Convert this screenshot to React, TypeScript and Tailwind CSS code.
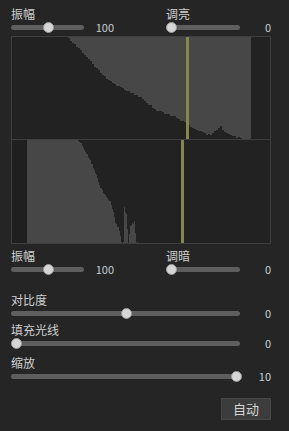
import React from 'react';

const FONT = { fontFamily: '"Noto Sans CJK SC", "Noto Sans", sans-serif' };

type Pt = [number, number];

// piecewise linear lookup with a little deterministic jitter, drawn as steps
function stairs(ctrl: Pt[], x0: number, x1: number, step: number, amp: number, seed: number): Pt[] {
  const out: Pt[] = [];
  const at = (x: number) => {
    for (let i = 0; i < ctrl.length - 1; i++) {
      const [ax, ay] = ctrl[i];
      const [bx, by] = ctrl[i + 1];
      if (x >= ax && x <= bx) return ay + ((x - ax) / (bx - ax)) * (by - ay);
    }
    return ctrl[ctrl.length - 1][1];
  };
  let prev = at(x0);
  out.push([x0, prev]);
  for (let x = x0 + step; x <= x1; x += step) {
    const n = Math.sin(x * 12.9898 + seed) * 43758.5453;
    const j = (n - Math.floor(n) - 0.5) * 2 * amp;
    const y = Math.round(at(x) + j);
    out.push([x, prev]);
    out.push([x, y]);
    prev = y;
  }
  return out;
}

const upperCurve: Pt[] = [
  [66, 37], [70, 41], [80, 50], [90, 62], [100, 73], [110, 82], [120, 87], [130, 92],
  [140, 98], [145, 102], [155, 110], [175, 117], [185, 123], [190, 127], [200, 132],
  [210, 135], [213, 132], [217, 129], [220, 126], [223, 132], [230, 135], [235, 137],
  [240, 138], [246, 139], [251, 139],
];

const lowerCurve: Pt[] = [
  [75, 140], [80, 142], [85, 152], [90, 160], [93, 168], [97, 178], [100, 188], [105, 195],
  [110, 202], [113, 212], [115, 223], [119, 230], [121, 243], [123, 243], [124, 206],
  [126, 215], [128, 243], [130, 226], [134, 222], [136, 243], [140, 243],
];

function toStr(p: Pt[]) {
  return p.map(([x, y]) => `${x},${y}`).join(' ');
}

function Histogram() {
  const up = [[12, 139], [12, 37], ...stairs(upperCurve, 66, 251, 2, 0.8, 3), [251, 139]] as Pt[];
  const low = [[27, 243], [27, 140], ...stairs(lowerCurve, 75, 140, 1, 1.2, 7), [140, 243]] as Pt[];
  return (
    <svg width={260} height={208} viewBox="11 36 260 208" className="block">
      <rect x={11} y={36} width={260} height={208} fill="#222222" />
      <rect x={12} y={37} width={239} height={102} fill="#474747" />
      <polygon points={toStr(up)} fill="#222222" />
      <rect x={186} y={37} width={3} height={102} fill="#86864f" />
      <rect x={12} y={140} width={15} height={103} fill="#1f1f1f" />
      <polygon points={toStr(low)} fill="#474747" />
      <rect x={181} y={140} width={3} height={103} fill="#86864f" />
      <rect x={11.5} y={36.5} width={259} height={207} fill="none" stroke="#3e3e3e" />
      <line x1={11} y1={139.5} x2={271} y2={139.5} stroke="#3e3e3e" />
    </svg>
  );
}

function Slider({ width, frac }: { width: number; frac: number }) {
  const left = frac * (width - 9);
  return (
    <div className="relative h-[12px]" style={{ width }}>
      <div className="absolute left-0 right-0 top-[4px] h-[5px] rounded-full bg-[#5e5e5e]" />
      <div
        className="absolute top-[1px] h-[11px] w-[11px] rounded-full bg-[#d6d6d6] border border-[#9a9a9a]"
        style={{ left }}
      />
    </div>
  );
}

function Label({ text }: { text: string }) {
  return <div className="h-[14px] text-[12px] leading-[14px] text-[#cfcfcf]">{text}</div>;
}

function Value({ v }: { v: string }) {
  return <div className="flex-1 text-right text-[11px] leading-[12px] text-[#c6cdd5]">{v}</div>;
}

function HalfControl({ label, value, frac, sliderW, colW }: { label: string; value: string; frac: number; sliderW: number; colW: number }) {
  return (
    <div style={{ width: colW }}>
      <Label text={label} />
      <div className="flex items-center">
        <Slider width={sliderW} frac={frac} />
        <Value v={value} />
      </div>
    </div>
  );
}

function FullControl({ label, value, frac, className }: { label: string; value: string; frac: number; className: string }) {
  return (
    <div className={className}>
      <Label text={label} />
      <div className="flex items-center">
        <Slider width={229} frac={frac} />
        <Value v={value} />
      </div>
    </div>
  );
}

export default function App() {
  return (
    <div className="w-[289px] h-[431px] bg-[#252525] pl-[11px] pr-[18px] pt-[7px] overflow-hidden" style={FONT}>
      <div className="flex">
        <HalfControl label="振幅" value="100" frac={0.5} sliderW={73} colW={103} />
        <div className="ml-[52px]">
          <HalfControl label="调亮" value="0" frac={0} sliderW={74} colW={105} />
        </div>
      </div>

      <div className="mt-[3px]">
        <Histogram />
      </div>

      <div className="flex mt-[5px]">
        <HalfControl label="振幅" value="100" frac={0.5} sliderW={73} colW={103} />
        <div className="ml-[52px]">
          <HalfControl label="调暗" value="0" frac={0} sliderW={74} colW={105} />
        </div>
      </div>

      <FullControl label="对比度" value="0" frac={0.5} className="mt-[18px]" />
      <FullControl label="填充光线" value="0" frac={0} className="mt-[4px]" />
      <FullControl label="缩放" value="10" frac={1} className="mt-[7px]" />

      <div className="flex justify-end mt-[16px]">
        <button className="w-[50px] h-[22px] bg-[#3c3c3c] border border-[#474747] text-[13px] text-[#d4d4d4] leading-[20px]">
          自动
        </button>
      </div>
    </div>
  );
}
